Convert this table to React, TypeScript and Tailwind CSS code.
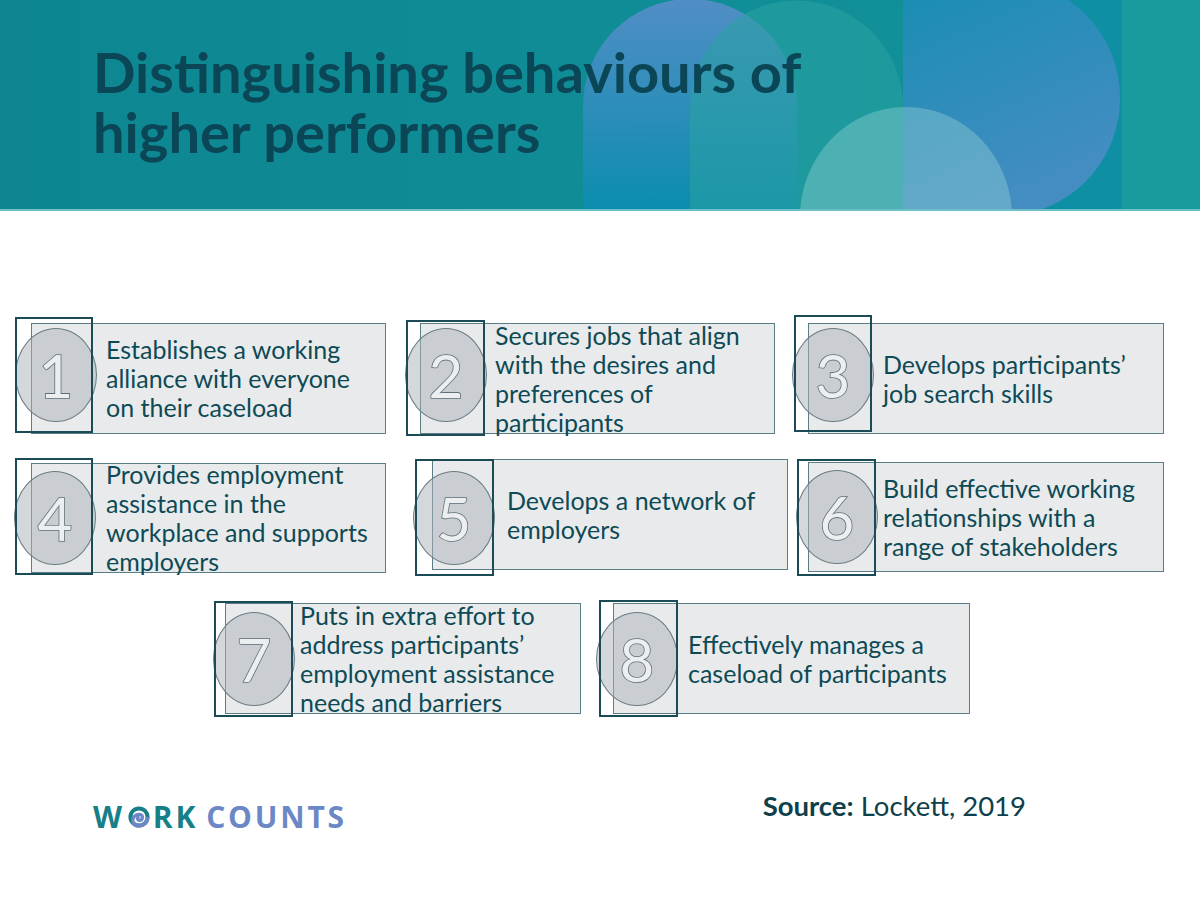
import React from "react";

type Card = {
  n: string;
  lines: string[];
  wrap: string;
  box: string;
  frame: string;
  circle: string;
};

const row1: Card[] = [
  {
    n: "1",
    lines: ["Establishes a working", "alliance with everyone", "on their caseload"],
    wrap: "ml-[15px] mt-[2px] w-[371px] h-[117px]",
    box: "ml-[16px] mt-[6px] w-[355px] h-[111px]",
    frame: "left-0 top-0 w-[78px] h-[116px]",
    circle: "left-0 top-[11px]",
  },
  {
    n: "2",
    lines: ["Secures jobs that align", "with the desires and", "preferences of", "participants"],
    wrap: "ml-[20px] mt-[5px] w-[369px] h-[116px]",
    box: "ml-[14px] mt-[3px] w-[355px] h-[111px]",
    frame: "left-0 top-0 w-[79px] h-[116px]",
    circle: "-left-[1px] top-[8px]",
  },
  {
    n: "3",
    lines: ["Develops participants\u2019", "job search skills"],
    wrap: "ml-[19px] mt-0 w-[370px] h-[119px]",
    box: "ml-[14px] mt-[8px] w-[356px] h-[111px]",
    frame: "left-0 top-0 w-[78px] h-[117px]",
    circle: "-left-[2px] top-[13px]",
  },
];

const row2: Card[] = [
  {
    n: "4",
    lines: ["Provides employment", "assistance in the", "workplace and supports", "employers"],
    wrap: "ml-[15px] mt-0 w-[371px] h-[117px]",
    box: "ml-[16px] mt-[5px] w-[355px] h-[110px]",
    frame: "left-0 top-0 w-[78px] h-[117px]",
    circle: "-left-[1px] top-[13px]",
  },
  {
    n: "5",
    lines: ["Develops a network of", "employers"],
    wrap: "ml-[29px] mt-[1px] w-[373px] h-[117px]",
    box: "ml-[17px] mt-0 w-[356px] h-[111px]",
    frame: "left-0 top-0 w-[79px] h-[117px]",
    circle: "-left-[2px] top-[12px]",
  },
  {
    n: "6",
    lines: ["Build effective working", "relationships with a", "range of stakeholders"],
    wrap: "ml-[9px] mt-[1px] w-[367px] h-[117px]",
    box: "ml-[11px] mt-[3px] w-[356px] h-[110px]",
    frame: "left-0 top-0 w-[79px] h-[117px]",
    circle: "-left-[1px] top-[11px]",
  },
];

const row3: Card[] = [
  {
    n: "7",
    lines: ["Puts in extra effort to", "address participants\u2019", "employment assistance", "needs and barriers"],
    wrap: "ml-[214px] mt-[1px] w-[367px] h-[116px]",
    box: "ml-[11px] mt-[2px] w-[356px] h-[111px]",
    frame: "left-0 top-0 w-[79px] h-[116px]",
    circle: "-left-[1px] top-[11px]",
  },
  {
    n: "8",
    lines: ["Effectively manages a", "caseload of participants"],
    wrap: "ml-[18px] mt-0 w-[371px] h-[117px]",
    box: "ml-[14px] mt-[3px] w-[357px] h-[111px]",
    frame: "left-0 top-0 w-[79px] h-[117px]",
    circle: "-left-[3px] top-[12px]",
  },
];

function CardView({ c }: { c: Card }) {
  return (
    <div className={`relative shrink-0 ${c.wrap}`}>
      <div
        className={`${c.box} flex items-center border border-[#5b7e86] bg-[#e8eaec] pl-[74px]`}
      >
        <div className="font-['Lato',sans-serif] text-[25px] leading-[29px] text-[#0e4a55]">
          {c.lines.map((l, i) => (
            <div key={i} className="whitespace-nowrap">
              {l}
            </div>
          ))}
        </div>
      </div>
      <div
        className={`absolute ${c.circle} flex h-[94px] w-[82px] items-center justify-center rounded-[50%] border border-[#6b7d82] bg-[rgba(172,178,184,0.5)]`}
      >
        <span className="font-['Lato',sans-serif] text-[60px] font-normal leading-none text-[#eceef0] [-webkit-text-stroke:1.6px_#5f6f74] [paint-order:stroke_fill]">
          {c.n}
        </span>
      </div>
      <div className={`absolute ${c.frame} border-2 border-[#1b4b56]`} />
    </div>
  );
}

function Swirl() {
  return (
    <svg width="22" height="22" viewBox="0 0 22 22" className="mx-[3px] shrink-0">
      <circle cx="11" cy="11" r="8.6" fill="none" stroke="#167f87" strokeWidth="4" />
      <path d="M19.6 11 A8.6 8.6 0 0 1 5.5 17.6" fill="none" stroke="#6c87c6" strokeWidth="4" />
      <path d="M5.5 17.6 C 2.8 12.5, 7.5 7.2, 12.4 8.6 C 15.4 9.6, 15 14.2, 11.6 14.4 C 9.6 14.5, 8.8 12.4, 10.2 11.4" fill="none" stroke="#6c87c6" strokeWidth="3.2" strokeLinecap="round" />
    </svg>
  );
}

export default function App() {
  return (
    <div className="relative h-[898px] w-[1200px] overflow-hidden bg-white">
      <header className="relative h-[211px] overflow-hidden">
        <svg className="absolute inset-0" width="1200" height="211" viewBox="0 0 1200 211">
          <defs>
            <linearGradient id="bg" x1="0" x2="1" y1="0" y2="0">
              <stop offset="0" stopColor="#0d8691" />
              <stop offset="1" stopColor="#12939b" />
            </linearGradient>
            <linearGradient id="p1" x1="0" y1="0" x2="0" y2="1">
              <stop offset="0" stopColor="#5a8ecc" />
              <stop offset="1" stopColor="#0a8db0" />
            </linearGradient>
            <linearGradient id="dd" x1="0" y1="0" x2="0.4" y2="1">
              <stop offset="0" stopColor="#1a8db5" />
              <stop offset="1" stopColor="#4e8dc8" />
            </linearGradient>
          </defs>
          <rect width="1200" height="211" fill="url(#bg)" />
          <rect x="1122" width="78" height="211" fill="#1fa0a3" opacity="0.55" />
          <rect x="903" width="219" height="211" fill="#0c8cac" opacity="0.5" />
          <path d="M583 211 V106 A107 107 0 0 1 797 106 V211 Z" fill="url(#p1)" opacity="0.88" />
          <path d="M690 211 V107 A106.5 106.5 0 0 1 903 107 V211 Z" fill="#2aa3a3" opacity="0.55" />
          <path d="M903 -20 H1003 A117 118 0 0 1 1003 216 H903 Z" fill="url(#dd)" opacity="0.85" />
          <ellipse cx="906" cy="217" rx="106" ry="110" fill="#9ad6d6" opacity="0.38" />
          <rect y="209" width="1200" height="2" fill="#6cc0c6" />
        </svg>
        <h1 className="relative pl-[93px] pt-[42px] font-['Lato',sans-serif] text-[56px] font-bold text-[#0b4656]">
          <span className="block h-[60px] leading-[60px]">Distinguishing behaviours of</span>
          <span className="block h-[60px] leading-[60px]">higher performers</span>
        </h1>
      </header>

      <main className="flex flex-col pt-[104px]">
        <div className="flex h-[143px] items-start">
          {row1.map((c) => (
            <CardView key={c.n} c={c} />
          ))}
        </div>
        <div className="flex h-[142px] items-start">
          {row2.map((c) => (
            <CardView key={c.n} c={c} />
          ))}
        </div>
        <div className="flex h-[118px] items-start">
          {row3.map((c) => (
            <CardView key={c.n} c={c} />
          ))}
        </div>

        <div className="mt-[72px] flex items-start">
          <div className="ml-[93px] mt-[12px] flex items-center font-['Open_Sans',sans-serif] text-[30px] font-bold leading-none tracking-[2.8px]">
            <span className="text-[#167f87]">W</span>
            <Swirl />
            <span className="text-[#167f87]">RK</span>
            <span className="ml-[8px] text-[#6c87c6]">COUNTS</span>
          </div>
          <div className="ml-auto mr-[174px] mt-[2px] font-['Lato',sans-serif] text-[27.5px] leading-none text-[#0e3f4a]">
            <span className="font-bold">Source:</span> Lockett, 2019
          </div>
        </div>
      </main>
    </div>
  );
}
